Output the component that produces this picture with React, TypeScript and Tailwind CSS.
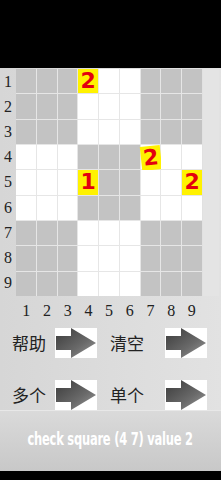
import React from "react";

const vals: Record<string, { v: string; tilt?: boolean }> = {
  "0-3": { v: "2" },
  "3-6": { v: "2", tilt: true },
  "4-3": { v: "1" },
  "4-8": { v: "2" },
};

function Arrow() {
  return (
    <svg width="42" height="30" viewBox="0 0 42 30" className="block">
      <defs>
        <linearGradient id="ag" x1="0" y1="0" x2="1" y2="1">
          <stop offset="0" stopColor="#3a3a3a" />
          <stop offset="0.6" stopColor="#6a6a6a" />
          <stop offset="1" stopColor="#9a9a9a" />
        </linearGradient>
      </defs>
      <rect x="0" y="0" width="42" height="30" fill="#ffffff" />
      <path d="M1 8 L16 8 L16 0 L41 15 L16 30 L16 22 L1 22 Z" fill="url(#ag)" />
    </svg>
  );
}

export default function App() {
  const serif = { fontFamily: '"Liberation Serif", "DejaVu Serif", serif' };
  const cjk = { fontFamily: '"Noto Sans CJK SC", "Noto Sans", sans-serif' };
  return (
    <div className="w-[221px] h-[480px] bg-black flex flex-col overflow-hidden">
      <div className="h-[68px] shrink-0" />
      <div className="bg-gradient-to-r from-[#d6d6d6] via-[#dcdcdc] to-[#e2e2e2] flex flex-col h-[342px] shrink-0">
        <div className="flex pt-[1px]">
          <div className="w-[16px] flex flex-col text-[16px] text-[#222]" style={serif}>
            {Array.from({ length: 9 }, (_, i) => (
              <div key={i} className="h-[25.2px] flex items-center justify-center">
                {i + 1}
              </div>
            ))}
          </div>
          <div className="w-[186px] h-[227px] grid grid-cols-9 grid-rows-9 gap-[1px] bg-[#e6e6e6]">
            {Array.from({ length: 81 }, (_, k) => {
              const r = Math.floor(k / 9);
              const c = k % 9;
              const br = Math.floor(r / 3);
              const bc = Math.floor(c / 3);
              const gray = (br + bc) % 2 === 0;
              const cell = vals[`${r}-${c}`];
              return (
                <div
                  key={k}
                  className={`${gray ? "bg-[#c3c3c3]" : "bg-white"} relative flex items-center justify-center`}
                >
                  {cell && (
                    <div
                      className={`absolute inset-0 bg-[#fff200] flex items-center justify-center text-[#e3000f] text-[22px] font-bold leading-none ${cell.tilt ? "rotate-[-6deg] translate-y-[1px]" : ""}`}
                      style={{ fontFamily: '"DejaVu Sans", sans-serif' }}
                    >
                      {cell.v}
                    </div>
                  )}
                </div>
              );
            })}
          </div>
          <div className="w-[16px] bg-[#e4e4e4] ml-[1px]" />
        </div>
        <div className="flex h-[29px] pl-[16px] items-center text-[16px] text-[#222]" style={serif}>
          {Array.from({ length: 9 }, (_, i) => (
            <div key={i} className="w-[20.7px] text-center">
              {i + 1}
            </div>
          ))}
        </div>
        <div className="flex flex-col gap-[23px] pt-[3px]">
          {[
            ["帮助", "清空"],
            ["多个", "单个"],
          ].map((row, i) => (
            <div key={i} className="flex items-center h-[29px]">
              <div className="w-[55px] pl-[12px] text-[17px] text-[#222] leading-none" style={cjk}>
                {row[0]}
              </div>
              <Arrow />
              <div className="w-[68px] pl-[13px] text-[17px] text-[#222] leading-none" style={cjk}>
                {row[1]}
              </div>
              <Arrow />
            </div>
          ))}
        </div>
      </div>
      <div className="h-[61px] shrink-0 bg-gradient-to-b from-[#dadada] to-[#c8c8c8] border-t border-[#e8e8e8] flex items-center justify-center">
        <span
          className="text-white text-[17px] font-bold tracking-[-0.3px] scale-x-[0.75] whitespace-nowrap pb-[2px]"
          style={{ fontFamily: '"DejaVu Sans Condensed", "DejaVu Sans", sans-serif' }}
        >
          check square (4 7) value 2
        </span>
      </div>
    </div>
  );
}
